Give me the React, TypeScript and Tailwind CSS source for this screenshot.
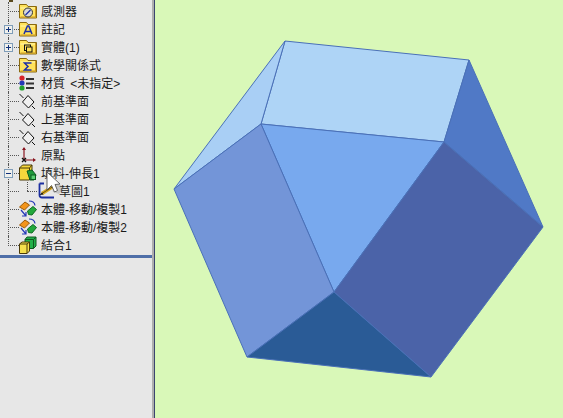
import React from 'react';

const cjk = '"Liberation Sans", "Noto Sans CJK TC", sans-serif';

const Folder: React.FC<{ children: React.ReactNode }> = ({ children }) => (
  <svg width="18" height="16" viewBox="0 0 18 16" className="block">
    <path d="M0.5 15 V1.5 H7.5 L9 3.5 H17.5 V15 Z" fill="#ffe35c" stroke="#8a6a10" />
    <path d="M1.5 5 H17" stroke="#fff6b0" />
    <path d="M1.5 14 H16.5 V4" fill="none" stroke="#d09a20" />
    {children}
  </svg>
);

const SensorIcon = () => (
  <Folder>
    <circle cx="9" cy="9.5" r="4.5" fill="#d8d8d8" stroke="#333" />
    <path d="M6.5 12 L11.5 7" stroke="#1c2fa8" strokeWidth="1.3" />
  </Folder>
);

const NoteIcon = () => (
  <Folder>
    <path d="M5 13 L8.4 5 H9.8 L13 13 M6.5 10.5 H11.5" fill="none" stroke="#1c2fa8" strokeWidth="1.5" />
  </Folder>
);

const BodyFolderIcon = () => (
  <Folder>
    <rect x="5.5" y="6" width="6" height="5.5" fill="none" stroke="#111" />
    <rect x="7.5" y="8" width="5.5" height="5" fill="#ffe35c" stroke="#111" />
  </Folder>
);

const EquationIcon = () => (
  <Folder>
    <path d="M12.5 6 H5.5 L9 9.5 L5.5 13 H12.5" fill="none" stroke="#1c2fa8" strokeWidth="1.5" />
  </Folder>
);

const MaterialIcon = () => (
  <svg width="18" height="18" viewBox="0 0 18 18" className="block">
    <circle cx="3" cy="4" r="2.6" fill="#d8232a" />
    <circle cx="3" cy="9" r="2.6" fill="#2438b8" />
    <circle cx="3" cy="14" r="2.6" fill="#22a02c" />
    <path d="M7 5 H15 M7 9.5 H15 M7 14 H15" stroke="#333" strokeWidth="2" />
  </svg>
);

const PlaneIcon = () => (
  <svg width="18" height="18" viewBox="0 0 18 18" className="block">
    <path d="M3.5 10 L9 3.5 L15 10 L9.5 16 Z" fill="#f0f0f0" stroke="#111" />
    <path d="M0.5 2 L4.5 6 M13 14 L16 17" stroke="#111" />
  </svg>
);

const OriginIcon = () => (
  <svg width="18" height="18" viewBox="0 0 18 18" className="block">
    <path d="M5 14 V2 M5 14 H16" stroke="#8a1620" strokeWidth="1.2" />
    <path d="M3 4 L5 1 L7 4 Z M14 12 L17 14 L14 16 Z" fill="#8a1620" />
    <path d="M3 12 L7 16 M7 12 L3 16" stroke="#111" strokeWidth="1.3" />
  </svg>
);

const ExtrudeIcon = () => (
  <svg width="18" height="18" viewBox="0 0 18 18" className="block">
    <path d="M0.5 4 L3.5 1 H13 V13 L10.5 16 H0.5 Z" fill="#f5d73c" stroke="#4a3a08" />
    <path d="M0.5 4 H10.5 V16 M10.5 4 L13 1" fill="none" stroke="#4a3a08" />
    <path d="M8 7 L13 6 L17 11 L15 16 L11 16 Z" fill="#1f9a3c" stroke="#0c5a20" />
    <rect x="12" y="11" width="4.5" height="4.5" fill="#57d070" stroke="#0c5a20" />
  </svg>
);

const MoveIcon = () => (
  <svg width="18" height="18" viewBox="0 0 18 18" className="block">
    <path d="M0.5 7 L6 2 L10.5 5 L5.5 10 Z" fill="#f2941c" stroke="#9a5a08" />
    <path d="M8.5 11 L14 6.5 L17.5 9.5 L13 15 L9.5 14.5 Z" fill="#22a83c" stroke="#0f6a22" />
    <path d="M10 1 Q15.5 1 16 5.5" fill="none" stroke="#2438b8" strokeWidth="1.2" />
    <path d="M2 10 L7 16 M7 12 V16 H3" fill="none" stroke="#2438b8" strokeWidth="1.2" />
  </svg>
);

const CombineIcon = () => (
  <svg width="18" height="18" viewBox="0 0 18 18" className="block">
    <path d="M6 3.5 L8 1 H17 V10 L14.5 12.5 H6 Z" fill="#22b04a" stroke="#0c5a20" />
    <path d="M6 3.5 H14.5 V12.5 M14.5 3.5 L17 1" fill="none" stroke="#0c5a20" />
    <path d="M0.5 8 L3 6 H10.5 V15 L8 17.5 H0.5 Z" fill="#f5e04c" stroke="#4a3a08" />
    <path d="M0.5 8 H8 V17.5 M8 8 L10.5 6" fill="none" stroke="#4a3a08" />
  </svg>
);

const SketchIcon = () => (
  <svg width="20" height="18" viewBox="0 0 20 18" className="block">
    <path d="M1.5 1.5 H6 M1.5 1.5 V13 Q1.5 15.5 4 15.5 H16" fill="none" stroke="#1c2fa0" strokeWidth="1.8" />
    <path d="M4 11.5 L15 4.5" stroke="#d8a820" strokeWidth="3.4" />
    <path d="M4 11.5 L15 4.5" stroke="#3a2a08" strokeWidth="0.7" />
    <path d="M1.5 13 L4 10.5 L5.5 12.5 Z" fill="#111" />
  </svg>
);

const ExpandBox: React.FC<{ open?: boolean }> = ({ open }) => (
  <span className="absolute left-[4px] top-[5px] flex h-[9px] w-[9px] items-center justify-center border border-[#7f9db9] bg-[#f0f0ec]">
    <span className="absolute h-px w-[5px] bg-[#10307a]" />
    {!open && <span className="absolute h-[5px] w-px bg-[#10307a]" />}
  </span>
);

interface NodeRow {
  label: string;
  icon: React.ReactNode;
  expand?: 'plus' | 'minus';
  child?: boolean;
  last?: boolean;
}

const rows: NodeRow[] = [
  { label: '感測器', icon: <SensorIcon /> },
  { label: '註記', icon: <NoteIcon />, expand: 'plus' },
  { label: '實體(1)', icon: <BodyFolderIcon />, expand: 'plus' },
  { label: '數學關係式', icon: <EquationIcon /> },
  { label: '材質 <未指定>', icon: <MaterialIcon /> },
  { label: '前基準面', icon: <PlaneIcon /> },
  { label: '上基準面', icon: <PlaneIcon /> },
  { label: '右基準面', icon: <PlaneIcon /> },
  { label: '原點', icon: <OriginIcon /> },
  { label: '填料-伸長1', icon: <ExtrudeIcon />, expand: 'minus' },
  { label: '草圖1', icon: <SketchIcon />, child: true },
  { label: '本體-移動/複製1', icon: <MoveIcon /> },
  { label: '本體-移動/複製2', icon: <MoveIcon /> },
  { label: '結合1', icon: <CombineIcon />, last: true },
];

const TreeRow: React.FC<{ row: NodeRow }> = ({ row }) => (
  <div className="relative flex h-[18px] items-center">
    {/* connectors */}
    <span className={`absolute left-[8px] top-0 w-0 border-l border-dotted border-[#555] ${row.last ? 'h-[10px]' : 'h-[18px]'}`} />
    <span className="absolute left-[8px] top-[9px] h-0 w-[11px] border-t border-dotted border-[#555]" />
    {row.child && (
      <>
        <span className="absolute left-[27px] top-0 h-[9px] w-0 border-l border-dotted border-[#555]" />
        <span className="absolute left-[27px] top-[9px] h-0 w-[10px] border-t border-dotted border-[#555]" />
      </>
    )}
    {row.expand && <ExpandBox open={row.expand === 'minus'} />}
    <div className={`flex shrink-0 items-center ${row.child ? 'ml-[38px] w-[21px]' : 'ml-[19px] w-[22px]'}`}>{row.icon}</div>
    <span className="whitespace-pre pt-[2px] text-[12px] leading-[16px] text-[#1a1a1a] [word-spacing:2px]">{row.label}</span>
  </div>
);

const App: React.FC = () => (
  <div className="flex h-[418px] w-[563px] overflow-hidden" style={{ fontFamily: cjk }}>
    {/* feature tree */}
    <div className="relative flex w-[152px] shrink-0 flex-col bg-[#e7e7e7]">
      <div className="h-[2px]">
        <div className="ml-[9px] h-[2px] w-[4px] bg-[#5a4a20]" />
      </div>
      {rows.map((row) => (
        <TreeRow key={row.label} row={row} />
      ))}
      <div className="mt-[1px] h-[3px] bg-[#4f6fa8]" />
      {/* mouse pointer over the tree */}
      <svg width="24" height="28" viewBox="0 0 24 28" className="absolute left-[44px] top-[170px]">
        <path d="M6 6 L20 18 L15 24 L9 22 Z" fill="#777" opacity="0.3" />
        <path d="M3 2 V20 L7.5 15.5 L10.5 22 L13.5 20.5 L11 14.5 L16 14 Z" fill="#fff" stroke="#444" strokeWidth="0.8" />
      </svg>
    </div>
    <div className="w-[2px] shrink-0 bg-[#aeaeae]" />
    <div className="w-[1px] shrink-0 bg-[#3b4470]" />
    {/* graphics area */}
    <div className="min-w-0 flex-1 bg-[#d9f8b8]">
      <svg width="408" height="418" viewBox="155 0 408 418" className="block">
        <g stroke="#4a70b8" strokeWidth="1" strokeLinejoin="round">
          <polygon points="285,41 469,60 444,142 261,124" fill="#aed4f6" />
          <polygon points="285,41 261,124 174,189" fill="#a9cff5" />
          <polygon points="469,60 543,227 444,142" fill="#5079c6" />
          <polygon points="261,124 444,142 334,292" fill="#78a9ee" />
          <polygon points="261,124 334,292 247,357 174,189" fill="#7395d8" />
          <polygon points="444,142 543,227 431,377 334,292" fill="#4b63a8" />
          <polygon points="334,292 431,377 247,357" fill="#2a5b96" />
        </g>
      </svg>
    </div>
  </div>
);

export default App;
